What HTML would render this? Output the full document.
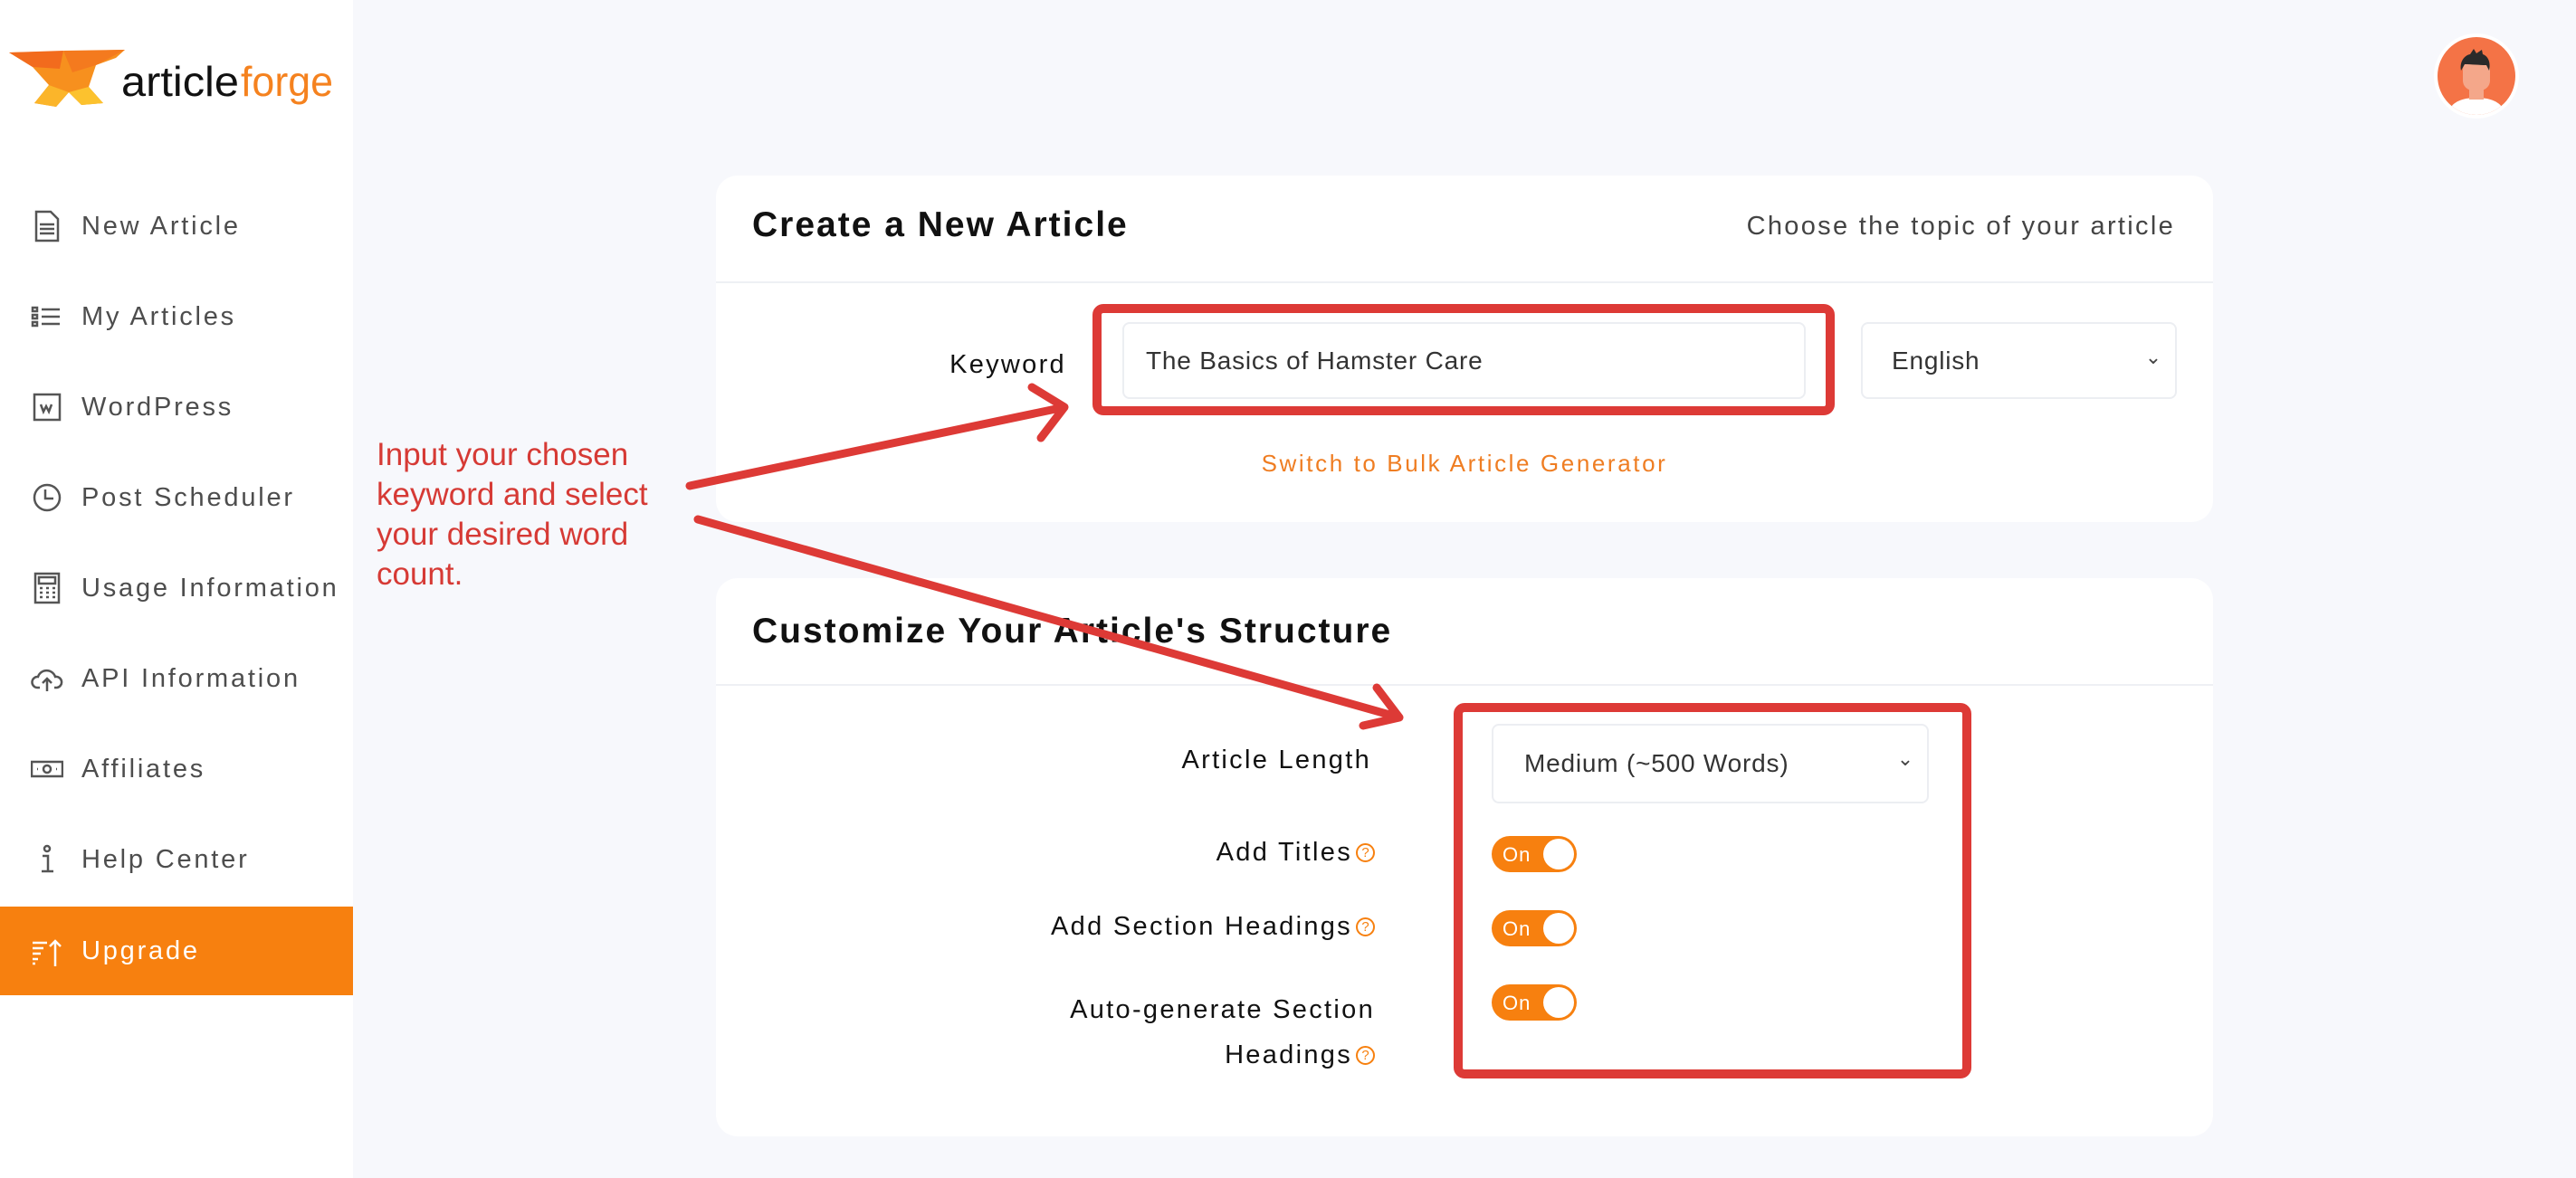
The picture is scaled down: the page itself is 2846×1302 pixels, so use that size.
<!DOCTYPE html>
<html><head><meta charset="utf-8"><style>
*{margin:0;padding:0;box-sizing:border-box}
body{width:2846px;height:1302px;background:#f7f8fc;font-family:"Liberation Sans",sans-serif;position:relative;overflow:hidden}
.side{position:absolute;left:0;top:0;width:390px;height:1302px;background:#fff}
.nav{position:absolute;left:0;width:390px;height:100px;display:flex;align-items:center;font-size:29px;letter-spacing:2.8px;color:#4d4d4d}
.nav .ic{position:absolute;left:34px;top:32px;width:36px;height:36px}
.nav span{position:absolute;left:90px}
.up{background:#f7800f;color:#fff}
.card{position:absolute;left:791px;width:1654px;background:#fff;border-radius:24px}
.h{position:absolute;left:40px;font-size:39px;color:#111;letter-spacing:2px;font-weight:bold}
.line{position:absolute;left:0;right:0;height:2px;background:#eef0f4}
.lbl{position:absolute;font-size:29px;color:#111;letter-spacing:2.3px;text-align:right}
.inp{position:absolute;border:2px solid #eceef2;border-radius:8px;background:#fff;font-size:28px;letter-spacing:0.8px;color:#333;display:flex;align-items:center}
.tog{position:absolute;width:94px;height:40px;border-radius:20px;background:#f7800f}
.tog b{position:absolute;left:12px;top:8px;font-size:22px;color:#fff;font-weight:normal;letter-spacing:1px}
.tog i{position:absolute;right:3px;top:3px;width:34px;height:34px;border-radius:50%;background:#fff}
.q{display:inline-block;width:21px;height:21px;border:2px solid #f7800f;border-radius:50%;color:#f7800f;font-size:15px;line-height:18px;text-align:center;vertical-align:4px;margin-left:4px;letter-spacing:0}
.red{position:absolute;border:10px solid #dd3a36;border-radius:12px}
</style></head><body>
<div class="side">
<svg style="position:absolute;left:10px;top:50px" width="370" height="75" viewBox="0 0 370 75">
<polygon points="0,8 128,5 118,14 96,22 88,46 104,64 80,66 66,52 52,68 28,64 44,44 26,24" fill="#f7901e"/>
<polygon points="0,8 60,6 56,26 26,24" fill="#f26b1d"/>
<polygon points="60,6 128,5 96,22 70,30" fill="#f47a1e"/>
<polygon points="44,44 66,52 52,68 28,64" fill="#fbb52a"/>
<polygon points="66,52 88,46 104,64 80,66" fill="#fcc22e"/>
<text x="124" y="56" font-family="Liberation Sans" font-size="46" fill="#111" textLength="130" lengthAdjust="spacingAndGlyphs">article</text>
<text x="256" y="56" font-family="Liberation Sans" font-size="46" fill="#f5821f" textLength="102" lengthAdjust="spacingAndGlyphs">forge</text>
</svg>
<div class="nav" style="top:200px"><svg class="ic" viewBox="0 0 36 36" fill="none" stroke="#555" stroke-width="2.5"><path d="M6 2h16l8 8v24H6z M10 16h16 M10 21h16 M10 26h16"/></svg><span>New Article</span></div>
<div class="nav" style="top:300px"><svg class="ic" viewBox="0 0 36 36" fill="none" stroke="#555" stroke-width="2.5"><path d="M2 8h5v4H2z M2 16h5v4H2z M2 24h5v4H2z M12 10h20 M12 18h20 M12 26h20"/></svg><span>My Articles</span></div>
<div class="nav" style="top:400px"><svg class="ic" viewBox="0 0 36 36" fill="none" stroke="#555" stroke-width="2.5"><path d="M4 4h28v28H4z M11 15l3 8 3-6 3 6 3-8"/></svg><span>WordPress</span></div>
<div class="nav" style="top:500px"><svg class="ic" viewBox="0 0 36 36" fill="none" stroke="#555" stroke-width="2.5"><circle cx="18" cy="18" r="14"/><path d="M16 9v10h9"/></svg><span>Post Scheduler</span></div>
<div class="nav" style="top:600px"><svg class="ic" viewBox="0 0 36 36" fill="none" stroke="#555" stroke-width="2.5"><path d="M5 2h26v32H5z M9 6h18v7H9z M10 18h3 M17 18h3 M24 18h3 M10 23h3 M17 23h3 M24 23h3 M10 28h3 M17 28h3 M24 28h3"/></svg><span>Usage Information</span></div>
<div class="nav" style="top:700px"><svg class="ic" viewBox="0 0 36 36" fill="none" stroke="#555" stroke-width="2.5"><path d="M10 28H7a6 6 0 0 1 1-12 10 10 0 0 1 19 0 6 6 0 0 1 2 12h-3 M18 32V18 M13 23l5-5 5 5"/></svg><span>API Information</span></div>
<div class="nav" style="top:800px"><svg class="ic" viewBox="0 0 36 36" fill="none" stroke="#555" stroke-width="2.5"><path d="M1 10h34v16H1z"/><circle cx="18" cy="18" r="4"/><path d="M7 18h1 M28 18h1"/></svg><span>Affiliates</span></div>
<div class="nav" style="top:900px"><svg class="ic" viewBox="0 0 36 36" fill="none" stroke="#555" stroke-width="2.5"><circle cx="18" cy="6" r="3"/><path d="M13 14h6v16 M12 31h13"/></svg><span>Help Center</span></div>
<div class="nav up" style="top:1002px;height:98px"><svg class="ic" viewBox="0 0 36 36" fill="none" stroke="#fff" stroke-width="2.5"><path d="M2 8h16 M2 14h12 M2 20h9 M2 26h6 M2 31h3 M27 34V6 M21 12l6-6 6 6"/></svg><span>Upgrade</span></div>
</div>

<svg style="position:absolute;left:2688px;top:36px" width="96" height="96" viewBox="0 0 96 96">
<circle cx="48" cy="48" r="47" fill="#fff"/><circle cx="48" cy="48" r="43" fill="#f47346"/>
<clipPath id="c"><circle cx="48" cy="48" r="43"/></clipPath>
<g clip-path="url(#c)"><path d="M20 96v-14c6-8 18-10 28-10s22 2 28 10v14z" fill="#fff"/>
<rect x="40" y="60" width="16" height="14" fill="#f4a78a"/>
<rect x="33" y="30" width="30" height="34" rx="11" fill="#f4a78a"/>
<path d="M31 42c-2-10 4-17 10-18l4-6 3 5 6-4 1 5c6 2 9 9 7 18l-3-6c-8 0-17-1-24-1z" fill="#2a2a2a"/></g>
</svg>

<div class="card" style="top:194px;height:383px">
<div class="h" style="top:33px">Create a New Article</div>
<div style="position:absolute;right:42px;top:40px;font-size:29px;color:#444;letter-spacing:2.3px">Choose the topic of your article</div>
<div class="line" style="top:117px"></div>
<div class="lbl" style="right:1267px;top:193px">Keyword</div>
<div class="inp" style="left:449px;top:162px;width:755px;height:85px;padding-left:24px">The Basics of Hamster Care</div>
<div class="inp" style="left:1265px;top:162px;width:349px;height:85px;padding-left:32px;font-size:28px">English<span style="position:absolute;right:14px;top:24px;font-size:22px;color:#444">&#8964;</span></div>
<div style="position:absolute;left:0;right:0;top:303px;text-align:center;font-size:26px;color:#ef7d22;letter-spacing:2.6px">Switch to Bulk Article Generator</div>
</div>

<div class="card" style="top:639px;height:617px">
<div class="h" style="top:37px">Customize Your Article's Structure</div>
<div class="line" style="top:117px"></div>
<div class="lbl" style="right:930px;top:185px">Article Length</div>
<div class="inp" style="left:857px;top:161px;width:483px;height:88px;padding-left:34px;font-size:28px">Medium (~500 Words)<span style="position:absolute;right:14px;top:24px;font-size:22px;color:#444">&#8964;</span></div>
<div class="lbl" style="right:926px;top:287px">Add Titles<span class="q">?</span></div>
<div class="lbl" style="right:926px;top:369px">Add Section Headings<span class="q">?</span></div>
<div class="lbl" style="right:926px;top:452px;line-height:50px">Auto-generate Section<br>Headings<span class="q">?</span></div>
<div class="tog" style="left:857px;top:285px"><b>On</b><i></i></div>
<div class="tog" style="left:857px;top:367px"><b>On</b><i></i></div>
<div class="tog" style="left:857px;top:449px"><b>On</b><i></i></div>
</div>

<div class="red" style="left:1207px;top:336px;width:820px;height:123px"></div>
<div class="red" style="left:1606px;top:777px;width:572px;height:415px"></div>

<div style="position:absolute;left:416px;top:481px;font-size:35px;line-height:44px;color:#d63a35">Input your chosen<br>keyword and select<br>your desired word<br>count.</div>

<svg style="position:absolute;left:0;top:0" width="2846" height="1302" fill="none" stroke="#dd3a36" stroke-width="9" stroke-linecap="round" stroke-linejoin="round">
<path d="M762 537L1176 450 M1140 428L1176 450 1150 484"/>
<path d="M771 574L1546 793 M1506 802L1546 793 1521 760"/>
</svg>
</body></html>
